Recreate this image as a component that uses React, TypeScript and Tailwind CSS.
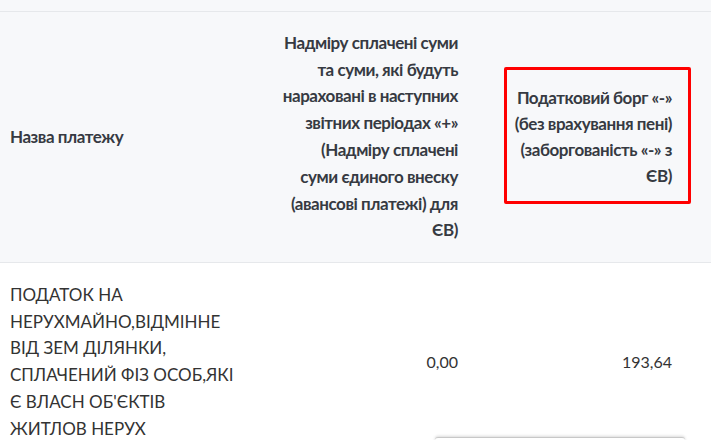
import React from "react";

const headCol2 = [
  "Надміру сплачені суми",
  "та суми, які будуть",
  "нараховані в наступних",
  "звітних періодах «+»",
  "(Надміру сплачені",
  "суми єдиного внеску",
  "(авансові платежі) для",
  "ЄВ)",
];

const headCol3 = [
  "Податковий борг «-»",
  "(без врахування пені)",
  "(заборгованість «-» з",
  "ЄВ)",
];

const paymentName = [
  "ПОДАТОК НА",
  "НЕРУХМАЙНО,ВІДМІННЕ",
  "ВІД ЗЕМ ДІЛЯНКИ,",
  "СПЛАЧЕНИЙ ФІЗ ОСОБ,ЯКІ",
  "Є ВЛАСН ОБ'ЄКТІВ",
  "ЖИТЛОВ НЕРУХ",
];

const Lines = ({ lines }: { lines: string[] }) => (
  <>
    {lines.map((l, i) => (
      <span key={i} className="block whitespace-nowrap">
        {l}
      </span>
    ))}
  </>
);

const App = () => {
  return (
    <div className="relative h-[440px] w-full overflow-hidden bg-white font-['Lato',sans-serif]">
      <div className="h-[12px] border-b border-b-[#e6e8eb] bg-[#f7f8fa]" />

      {/* header row */}
      <div className="grid h-[251px] grid-cols-[260px_214px_214px] border-b border-b-[#e6e8eb] bg-[#f7f8fa] text-[17px] font-bold tracking-[-0.45px] text-[#363a42]">
        <div className="flex items-center pl-[10px]">
          <span className="whitespace-nowrap">Назва платежу</span>
        </div>
        <div className="flex flex-col items-end justify-center pr-4 text-right leading-[26.8px]">
          <Lines lines={headCol2} />
        </div>
        <div className="flex flex-col items-end justify-center pr-4 text-right leading-[26px]">
          <Lines lines={headCol3} />
        </div>
      </div>

      {/* body row */}
      <div className="grid grid-cols-[260px_214px_214px] text-[17px] text-[#333333]">
        <div className="py-[19px] pl-[10px] leading-[26.7px]">
          <Lines lines={paymentName} />
        </div>
        <div className="flex items-center justify-end pr-4 text-[16px]">0,00</div>
        <div className="flex items-center justify-end pr-4 text-[16px]">193,64</div>
      </div>

      {/* annotation box */}
      <div className="absolute left-[504px] top-[67px] h-[137px] w-[187px] rounded-[2px] border-[3px] border-[#ff0000]" />

      {/* card peeking in at the bottom */}
      <div className="absolute left-[435px] top-[437px] h-[20px] w-[250px] rounded-t-[3px] border-t border-t-[#c8c8c8] bg-white shadow-[0_-1px_3px_rgba(0,0,0,0.15)]" />
    </div>
  );
};

export default App;
